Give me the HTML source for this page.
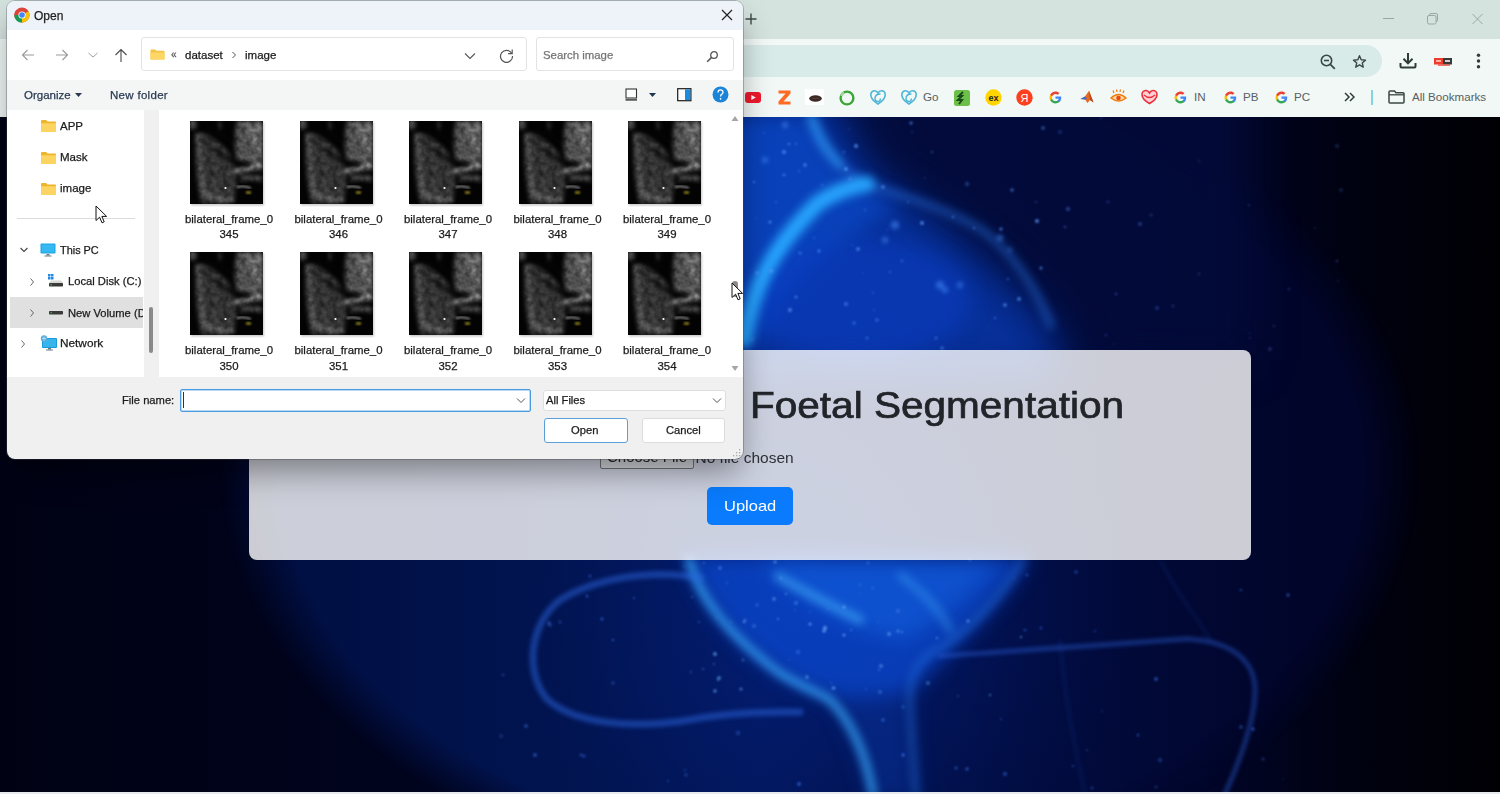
<!DOCTYPE html>
<html><head><meta charset="utf-8">
<style>
*{margin:0;padding:0;box-sizing:border-box}
html,body{width:1500px;height:794px;overflow:hidden}
body{position:relative;font-family:"Liberation Sans",sans-serif;background:#000418}
.a{position:absolute}
.t{position:absolute;white-space:nowrap;line-height:1}
#bg{left:0;top:117px;width:1500px;height:677px;overflow:hidden}
#tabs{left:0;top:0;width:1500px;height:39px;background:#d5e3df}
#tool{left:0;top:39px;width:1500px;height:78px;background:#f1f8f6}
#omni{left:720px;top:45px;width:662px;height:32px;background:#d8ebe9;border-radius:16px}
.bk{font-size:11.6px;color:#596064}
#card{left:249px;top:350px;width:1002px;height:210px;border-radius:8px;background:rgba(255,255,255,0.8);overflow:hidden}
#dlg{left:7px;top:1px;width:736px;height:458px;background:#f0f0f0;border-radius:8px;overflow:hidden;box-shadow:0 16px 32px -4px rgba(0,0,0,0.4),0 0 0 1px rgba(80,90,95,0.35)}
.d{font-size:11.5px;color:#1b1b1b}
#dlg .t{-webkit-text-stroke:0.25px currentColor}
</style></head>
<body>
<svg width="0" height="0" style="position:absolute">
<defs>
<filter color-interpolation-filters="sRGB" id="ub" x="-10%" y="-10%" width="120%" height="120%"><feGaussianBlur stdDeviation="2.2"/></filter>
<filter color-interpolation-filters="sRGB" id="spk" filterUnits="userSpaceOnUse" x="0" y="0" width="73" height="83"><feGaussianBlur in="SourceGraphic" stdDeviation="2.2" result="bl"/><feTurbulence type="fractalNoise" baseFrequency="0.18" numOctaves="2" seed="5" result="n"/><feColorMatrix in="n" type="matrix" values="1 0 0 0 0  1 0 0 0 0  1 0 0 0 0  0 0 0 0 1" result="g"/><feGaussianBlur in="g" stdDeviation="0.6" result="g2"/><feComposite in="bl" in2="g2" operator="arithmetic" k1="0.8" k2="0.38" k3="0" k4="0"/></filter>
<filter color-interpolation-filters="sRGB" id="ub1" x="-30%" y="-30%" width="160%" height="160%"><feGaussianBlur stdDeviation="0.8"/></filter>
<filter color-interpolation-filters="sRGB" id="sh" x="-10%" y="-10%" width="130%" height="130%"><feGaussianBlur stdDeviation="1"/></filter>
<clipPath id="uc"><rect x="0" y="0" width="73" height="83"/></clipPath>
<g id="us">
<rect x="1" y="1.5" width="73" height="83" fill="#000" opacity="0.22" filter="url(#sh)"/>
<rect x="0" y="0" width="73" height="83" fill="#030303"/>
<g clip-path="url(#uc)">
<g filter="url(#spk)">
<path d="M0 0 H6 V8 H0 Z" fill="#6a6a6a"/>
<path d="M6 12 C14 10 24 18 34 26 C44 36 46 52 46 64 C46 74 44 83 34 83 H12 C8 72 5 50 6 12 Z" fill="#474747"/>
<path d="M47 0 H73 V50 C66 46 58 44 48 42 C44 28 44 14 47 0 Z" fill="#666"/>
<path d="M56 2 H73 V36 C68 32 60 20 56 2 Z" fill="#858585"/>
<path d="M7 14 C9 30 10 60 14 78" stroke="#6a6a6a" stroke-width="4" fill="none"/>
<path d="M30 0 V14" stroke="#4a4a4a" stroke-width="2.5" fill="none"/>
<path d="M44 50 C52 50 62 48 72 44" stroke="#c0c0c0" stroke-width="4" fill="none"/>
<path d="M50 58 C56 56 64 56 72 58" stroke="#606060" stroke-width="5" fill="none"/>
<path d="M16 72 C22 78 32 80 44 79" stroke="#8a8a8a" stroke-width="3.5" fill="none"/>
<path d="M14 4 C22 10 32 14 44 22" stroke="#040404" stroke-width="10" fill="none"/>
<path d="M26 28 C30 34 36 38 42 42" stroke="#151515" stroke-width="5" fill="none"/>
<path d="M16 40 C20 44 22 50 24 58" stroke="#222" stroke-width="3" fill="none"/>
<path d="M30 46 C34 52 36 60 36 70" stroke="#2a2a2a" stroke-width="2.5" fill="none"/>
<path d="M12 20 C18 22 22 26 26 32" stroke="#1a1a1a" stroke-width="3" fill="none"/>
<path d="M46 42 C50 40 56 42 60 46" stroke="#050505" stroke-width="4" fill="none"/>
</g>
<path d="M47 66 C51 65 56 65 61 67" stroke="#c8c8c8" stroke-width="1.3" fill="none" filter="url(#ub1)"/>
<circle cx="35.5" cy="67" r="1.1" fill="#fff"/>
<rect x="56" y="70.5" width="5" height="2" fill="#b0a020" filter="url(#ub1)"/>
</g>
</g>
</defs></svg>
<!-- page background -->
<div id="bg" class="a"><svg width="1500" height="677" viewBox="0 117 1500 677">
<defs>
<linearGradient id="base" x1="0" y1="0" x2="1500" y2="0" gradientUnits="userSpaceOnUse">
<stop offset="0" stop-color="#000214"/><stop offset="0.3" stop-color="#00041e"/><stop offset="0.6" stop-color="#000528"/><stop offset="0.8" stop-color="#01052a"/><stop offset="0.9" stop-color="#000210"/><stop offset="1" stop-color="#000004"/>
</linearGradient>
<linearGradient id="circ" x1="220" y1="0" x2="1300" y2="0" gradientUnits="userSpaceOnUse">
<stop offset="0" stop-color="#000e40"/><stop offset="0.2" stop-color="#01124a"/><stop offset="0.5" stop-color="#02175a"/><stop offset="0.75" stop-color="#010c40"/><stop offset="1" stop-color="#01052a"/>
</linearGradient>
<radialGradient id="bigc" cx="820" cy="600" r="330" gradientUnits="userSpaceOnUse">
<stop offset="0" stop-color="#0630b0" stop-opacity="0.4"/><stop offset="0.6" stop-color="#04208a" stop-opacity="0.15"/><stop offset="1" stop-color="#021555" stop-opacity="0"/>
</radialGradient>
<filter color-interpolation-filters="sRGB" id="b1" filterUnits="userSpaceOnUse" x="-100" y="0" width="1700" height="900"><feGaussianBlur stdDeviation="0.9"/></filter>
<filter color-interpolation-filters="sRGB" id="b2" filterUnits="userSpaceOnUse" x="-100" y="0" width="1700" height="900"><feGaussianBlur stdDeviation="2"/></filter>
<filter color-interpolation-filters="sRGB" id="b5" filterUnits="userSpaceOnUse" x="-100" y="0" width="1700" height="900"><feGaussianBlur stdDeviation="5"/></filter>
<filter color-interpolation-filters="sRGB" id="b10" filterUnits="userSpaceOnUse" x="-100" y="0" width="1700" height="900"><feGaussianBlur stdDeviation="10"/></filter>
<filter color-interpolation-filters="sRGB" id="b20" filterUnits="userSpaceOnUse" x="-100" y="0" width="1700" height="900"><feGaussianBlur stdDeviation="22"/></filter>
<radialGradient id="cmr" cx="820" cy="470" r="600" gradientUnits="userSpaceOnUse" gradientTransform="translate(820 470) scale(1 0.7) translate(-820 -470)"><stop offset="0" stop-color="#fff"/><stop offset="0.9" stop-color="#fff"/><stop offset="1" stop-color="#000"/></radialGradient>
<mask id="cm" maskUnits="userSpaceOnUse" x="0" y="117" width="1500" height="677"><rect x="0" y="117" width="1500" height="677" fill="url(#cmr)"/></mask>
<filter color-interpolation-filters="sRGB" id="b40" filterUnits="userSpaceOnUse" x="-100" y="0" width="1700" height="900"><feGaussianBlur stdDeviation="40"/></filter>
</defs>
<rect x="0" y="117" width="1500" height="677" fill="url(#base)"/>
<rect x="0" y="117" width="1500" height="677" fill="url(#circ)" mask="url(#cm)"/>
<rect x="0" y="117" width="1500" height="677" fill="url(#bigc)"/>
<!-- top head region -->
<g filter="url(#b20)">
<path d="M720 100 H840 C870 180 960 220 1060 330 L1060 380 H720 Z" fill="#0836a8" opacity="0.85"/>
</g>
<g filter="url(#b20)">
<path d="M850 60 H1250 L1250 360 L1100 360 C1020 260 960 210 900 185 C870 165 855 140 850 60 Z" fill="#020a3a" opacity="0.85"/>
</g>
<g filter="url(#b10)">
<path d="M730 117 H812 C830 170 860 190 900 205 C860 230 800 260 760 340 H730 Z" fill="#0a48c8" opacity="0.7"/>
<ellipse cx="860" cy="300" rx="110" ry="60" fill="#0a3cc0" opacity="0.6"/>
</g>
<g filter="url(#b5)" fill="none" stroke-linecap="round">
<path d="M809 117 C815 140 825 160 867 184 C900 195 950 210 982 230 C1010 250 1035 285 1051 326" stroke="#2670e0" stroke-width="6" opacity="0.65"/>
<path d="M744 340 C752 290 770 250 818 203 C835 192 850 186 867 184" stroke="#28a8ff" stroke-width="16" opacity="0.95"/>
<path d="M812 117 C818 135 826 150 840 165" stroke="#30a8ff" stroke-width="9" opacity="0.6"/>
</g>
<g filter="url(#b2)" fill="#4a90ff" opacity="0.55">
<circle cx="895" cy="225" r="4"/><circle cx="885" cy="240" r="3"/><circle cx="945" cy="290" r="3"/><circle cx="940" cy="285" r="4"/><circle cx="960" cy="285" r="3"/><circle cx="785" cy="125" r="3"/><circle cx="765" cy="160" r="3"/><circle cx="1000" cy="238" r="3"/><circle cx="1010" cy="250" r="2"/>
</g>
<!-- bottom bowl -->
<g filter="url(#b10)">
<path d="M685 555 C710 620 760 670 818 692 C850 700 880 700 912 690 C950 650 1000 610 1030 555 Z" fill="#0a46cc" opacity="0.8"/>
<path d="M830 695 C850 730 862 760 870 800 H918 C912 760 910 730 912 690 Z" fill="#0838a8" opacity="0.45"/>
<path d="M760 560 C800 600 850 630 905 640 C940 620 980 590 1000 560 Z" fill="#1a70f0" opacity="0.4"/>
</g>
<g filter="url(#b5)" fill="none" stroke-linecap="round">
<path d="M689 560 C700 600 730 635 778 672 C800 686 818 692 830 700 C850 720 865 750 873 794" stroke="#38acff" stroke-width="7" opacity="0.9"/>
<path d="M1023 560 C1000 600 960 640 931 653 C915 665 908 680 910 708 C912 740 914 770 916 794" stroke="#2a80f0" stroke-width="5" opacity="0.55"/>
<path d="M778 576 C800 590 830 605 860 620" stroke="#48b8ff" stroke-width="8" opacity="0.65"/>
<path d="M900 575 C920 590 940 610 950 630" stroke="#48b8ff" stroke-width="6" opacity="0.45"/>
</g>
<g filter="url(#b2)" fill="none" stroke-linecap="round">
<path d="M700 578 C660 570 600 575 560 600 C528 625 525 675 548 700 C580 728 650 728 700 718 C740 712 770 712 800 712" stroke="#2a66e0" stroke-width="7" opacity="0.5" stroke-dasharray="4 3"/>
<path d="M940 656 C1000 652 1100 645 1185 639 C1230 640 1255 660 1255 690 C1255 720 1240 760 1225 794" stroke="#2a5ed8" stroke-width="4" opacity="0.55" stroke-dasharray="4 3"/>
<path d="M1060 640 C1065 700 1075 750 1085 794" stroke="#1e4ab0" stroke-width="2" opacity="0.3"/>
<path d="M1160 560 C1180 600 1200 620 1210 640" stroke="#1e4ab0" stroke-width="2" opacity="0.3"/>
</g>
<g filter="url(#b1)"><circle cx="844" cy="152" r="1.7" fill="#5a9cff" opacity="0.28"/><circle cx="908" cy="202" r="0.9" fill="#5a9cff" opacity="0.48"/><circle cx="756" cy="218" r="0.9" fill="#5a9cff" opacity="0.29"/><circle cx="874" cy="310" r="1.0" fill="#5a9cff" opacity="0.35"/><circle cx="936" cy="338" r="1.6" fill="#5a9cff" opacity="0.43"/><circle cx="1043" cy="128" r="2.0" fill="#5a9cff" opacity="0.38"/><circle cx="789" cy="144" r="1.2" fill="#5a9cff" opacity="0.62"/><circle cx="800" cy="253" r="1.7" fill="#5a9cff" opacity="0.42"/><circle cx="912" cy="132" r="0.9" fill="#5a9cff" opacity="0.34"/><circle cx="953" cy="217" r="1.2" fill="#5a9cff" opacity="0.51"/><circle cx="883" cy="187" r="1.9" fill="#5a9cff" opacity="0.56"/><circle cx="819" cy="251" r="1.5" fill="#5a9cff" opacity="0.64"/><circle cx="967" cy="184" r="2.2" fill="#5a9cff" opacity="0.30"/><circle cx="873" cy="293" r="1.0" fill="#5a9cff" opacity="0.47"/><circle cx="757" cy="273" r="1.9" fill="#5a9cff" opacity="0.51"/><circle cx="1012" cy="190" r="1.8" fill="#5a9cff" opacity="0.52"/><circle cx="922" cy="223" r="2.0" fill="#5a9cff" opacity="0.68"/><circle cx="890" cy="272" r="0.9" fill="#5a9cff" opacity="0.57"/><circle cx="942" cy="348" r="2.0" fill="#5a9cff" opacity="0.38"/><circle cx="863" cy="273" r="0.8" fill="#5a9cff" opacity="0.46"/><circle cx="796" cy="144" r="0.9" fill="#5a9cff" opacity="0.60"/><circle cx="784" cy="175" r="1.3" fill="#5a9cff" opacity="0.64"/><circle cx="770" cy="222" r="1.6" fill="#5a9cff" opacity="0.65"/><circle cx="995" cy="318" r="1.2" fill="#5a9cff" opacity="0.44"/><circle cx="854" cy="323" r="2.1" fill="#5a9cff" opacity="0.32"/><circle cx="799" cy="171" r="1.1" fill="#5a9cff" opacity="0.47"/><circle cx="925" cy="178" r="0.8" fill="#5a9cff" opacity="0.44"/><circle cx="858" cy="249" r="2.1" fill="#5a9cff" opacity="0.56"/><circle cx="902" cy="261" r="1.7" fill="#5a9cff" opacity="0.27"/><circle cx="1019" cy="299" r="2.0" fill="#5a9cff" opacity="0.61"/><circle cx="865" cy="210" r="0.9" fill="#5a9cff" opacity="0.54"/><circle cx="764" cy="133" r="1.1" fill="#5a9cff" opacity="0.32"/><circle cx="849" cy="129" r="0.8" fill="#5a9cff" opacity="0.32"/><circle cx="776" cy="202" r="0.8" fill="#5a9cff" opacity="0.64"/><circle cx="932" cy="152" r="1.2" fill="#5a9cff" opacity="0.41"/><circle cx="856" cy="146" r="2.0" fill="#5a9cff" opacity="0.70"/><circle cx="887" cy="230" r="0.9" fill="#5a9cff" opacity="0.30"/><circle cx="850" cy="179" r="2.0" fill="#5a9cff" opacity="0.32"/><circle cx="752" cy="339" r="1.5" fill="#5a9cff" opacity="0.32"/><circle cx="911" cy="123" r="1.5" fill="#5a9cff" opacity="0.69"/><circle cx="1008" cy="279" r="1.2" fill="#5a9cff" opacity="0.42"/><circle cx="796" cy="297" r="1.5" fill="#5a9cff" opacity="0.60"/><circle cx="846" cy="169" r="1.9" fill="#5a9cff" opacity="0.69"/><circle cx="1005" cy="305" r="1.9" fill="#5a9cff" opacity="0.58"/><circle cx="814" cy="238" r="1.3" fill="#5a9cff" opacity="0.26"/><circle cx="754" cy="182" r="1.2" fill="#5a9cff" opacity="0.56"/><circle cx="1037" cy="221" r="2.1" fill="#5a9cff" opacity="0.69"/><circle cx="1036" cy="202" r="1.1" fill="#5a9cff" opacity="0.35"/><circle cx="805" cy="165" r="1.7" fill="#5a9cff" opacity="0.66"/><circle cx="1001" cy="229" r="1.7" fill="#5a9cff" opacity="0.61"/><circle cx="771" cy="271" r="2.1" fill="#5a9cff" opacity="0.60"/><circle cx="974" cy="228" r="1.0" fill="#5a9cff" opacity="0.61"/><circle cx="846" cy="304" r="2.2" fill="#5a9cff" opacity="0.43"/><circle cx="867" cy="338" r="1.8" fill="#5a9cff" opacity="0.33"/><circle cx="784" cy="152" r="2.1" fill="#5a9cff" opacity="0.61"/><circle cx="790" cy="310" r="2.2" fill="#5a9cff" opacity="0.55"/><circle cx="852" cy="245" r="1.0" fill="#5a9cff" opacity="0.26"/><circle cx="1041" cy="268" r="1.5" fill="#5a9cff" opacity="0.67"/><circle cx="877" cy="320" r="2.0" fill="#5a9cff" opacity="0.34"/><circle cx="822" cy="185" r="1.1" fill="#5a9cff" opacity="0.51"/><circle cx="778" cy="619" r="1.0" fill="#6ab0ff" opacity="0.66"/><circle cx="810" cy="624" r="1.6" fill="#6ab0ff" opacity="0.66"/><circle cx="833" cy="688" r="1.5" fill="#6ab0ff" opacity="0.49"/><circle cx="868" cy="563" r="1.4" fill="#6ab0ff" opacity="0.33"/><circle cx="691" cy="672" r="1.0" fill="#6ab0ff" opacity="0.46"/><circle cx="937" cy="638" r="1.3" fill="#6ab0ff" opacity="0.48"/><circle cx="879" cy="670" r="0.9" fill="#6ab0ff" opacity="0.50"/><circle cx="774" cy="599" r="1.9" fill="#6ab0ff" opacity="0.48"/><circle cx="881" cy="666" r="2.1" fill="#6ab0ff" opacity="0.45"/><circle cx="898" cy="631" r="1.5" fill="#6ab0ff" opacity="0.56"/><circle cx="844" cy="635" r="1.5" fill="#6ab0ff" opacity="0.67"/><circle cx="928" cy="683" r="2.1" fill="#6ab0ff" opacity="0.37"/><circle cx="880" cy="692" r="2.0" fill="#6ab0ff" opacity="0.31"/><circle cx="731" cy="622" r="0.9" fill="#6ab0ff" opacity="0.36"/><circle cx="715" cy="654" r="1.9" fill="#6ab0ff" opacity="0.65"/><circle cx="743" cy="660" r="1.7" fill="#6ab0ff" opacity="0.31"/><circle cx="990" cy="695" r="1.1" fill="#6ab0ff" opacity="0.68"/><circle cx="825" cy="628" r="2.2" fill="#6ab0ff" opacity="0.62"/><circle cx="745" cy="620" r="1.5" fill="#6ab0ff" opacity="0.40"/><circle cx="757" cy="605" r="1.8" fill="#6ab0ff" opacity="0.26"/><circle cx="878" cy="622" r="0.8" fill="#6ab0ff" opacity="0.40"/><circle cx="902" cy="632" r="0.9" fill="#6ab0ff" opacity="0.69"/><circle cx="958" cy="696" r="0.9" fill="#6ab0ff" opacity="0.37"/><circle cx="703" cy="669" r="1.2" fill="#6ab0ff" opacity="0.31"/><circle cx="834" cy="688" r="1.9" fill="#6ab0ff" opacity="0.37"/><circle cx="741" cy="689" r="1.6" fill="#6ab0ff" opacity="0.57"/><circle cx="720" cy="568" r="1.8" fill="#6ab0ff" opacity="0.44"/><circle cx="715" cy="691" r="1.7" fill="#6ab0ff" opacity="0.61"/><circle cx="718" cy="680" r="0.9" fill="#6ab0ff" opacity="0.64"/><circle cx="844" cy="607" r="1.6" fill="#6ab0ff" opacity="0.67"/><circle cx="781" cy="578" r="1.5" fill="#6ab0ff" opacity="0.36"/><circle cx="727" cy="583" r="0.9" fill="#6ab0ff" opacity="0.34"/><circle cx="796" cy="603" r="1.9" fill="#6ab0ff" opacity="0.38"/><circle cx="860" cy="585" r="1.3" fill="#6ab0ff" opacity="0.26"/><circle cx="775" cy="562" r="1.8" fill="#6ab0ff" opacity="0.50"/><circle cx="754" cy="626" r="2.1" fill="#6ab0ff" opacity="0.30"/><circle cx="968" cy="621" r="1.5" fill="#6ab0ff" opacity="0.63"/><circle cx="824" cy="631" r="1.8" fill="#6ab0ff" opacity="0.69"/><circle cx="807" cy="677" r="1.8" fill="#6ab0ff" opacity="0.54"/><circle cx="828" cy="609" r="0.9" fill="#6ab0ff" opacity="0.31"/><circle cx="714" cy="664" r="1.2" fill="#6ab0ff" opacity="0.32"/><circle cx="719" cy="678" r="2.0" fill="#6ab0ff" opacity="0.55"/><circle cx="786" cy="594" r="1.2" fill="#6ab0ff" opacity="0.46"/><circle cx="744" cy="622" r="1.2" fill="#6ab0ff" opacity="0.68"/><circle cx="1021" cy="637" r="1.1" fill="#6ab0ff" opacity="0.68"/><circle cx="795" cy="610" r="0.8" fill="#6ab0ff" opacity="0.42"/><circle cx="851" cy="630" r="1.1" fill="#6ab0ff" opacity="0.48"/><circle cx="692" cy="597" r="0.9" fill="#6ab0ff" opacity="0.43"/><circle cx="704" cy="563" r="1.2" fill="#6ab0ff" opacity="0.35"/><circle cx="889" cy="634" r="1.9" fill="#6ab0ff" opacity="0.55"/><circle cx="1073" cy="766" r="1.3" fill="#3a70e0" opacity="0.40"/><circle cx="1288" cy="595" r="1.8" fill="#3a70e0" opacity="0.54"/><circle cx="535" cy="755" r="2.0" fill="#3a70e0" opacity="0.53"/><circle cx="1087" cy="750" r="1.0" fill="#3a70e0" opacity="0.49"/><circle cx="903" cy="755" r="1.9" fill="#3a70e0" opacity="0.62"/><circle cx="967" cy="769" r="1.8" fill="#3a70e0" opacity="0.56"/><circle cx="684" cy="567" r="1.0" fill="#3a70e0" opacity="0.41"/><circle cx="584" cy="756" r="1.6" fill="#3a70e0" opacity="0.53"/><circle cx="1001" cy="719" r="1.5" fill="#3a70e0" opacity="0.25"/><circle cx="1138" cy="735" r="1.5" fill="#3a70e0" opacity="0.49"/><circle cx="1027" cy="575" r="1.8" fill="#3a70e0" opacity="0.36"/><circle cx="560" cy="622" r="1.8" fill="#3a70e0" opacity="0.34"/><circle cx="1092" cy="788" r="1.5" fill="#3a70e0" opacity="0.42"/><circle cx="883" cy="720" r="1.9" fill="#3a70e0" opacity="0.53"/><circle cx="1014" cy="578" r="1.0" fill="#3a70e0" opacity="0.36"/><circle cx="1095" cy="631" r="1.6" fill="#3a70e0" opacity="0.26"/><circle cx="549" cy="623" r="1.7" fill="#3a70e0" opacity="0.56"/><circle cx="1041" cy="628" r="1.5" fill="#3a70e0" opacity="0.46"/><circle cx="873" cy="588" r="2.1" fill="#3a70e0" opacity="0.34"/><circle cx="1283" cy="779" r="0.8" fill="#3a70e0" opacity="0.46"/><circle cx="1156" cy="787" r="1.4" fill="#3a70e0" opacity="0.37"/><circle cx="668" cy="781" r="1.1" fill="#3a70e0" opacity="0.51"/><circle cx="613" cy="683" r="2.1" fill="#3a70e0" opacity="0.31"/><circle cx="1156" cy="679" r="2.0" fill="#3a70e0" opacity="0.57"/><circle cx="685" cy="770" r="1.5" fill="#3a70e0" opacity="0.26"/><circle cx="503" cy="675" r="1.4" fill="#3a70e0" opacity="0.39"/><circle cx="613" cy="640" r="1.2" fill="#3a70e0" opacity="0.63"/><circle cx="501" cy="736" r="2.0" fill="#3a70e0" opacity="0.30"/><circle cx="1241" cy="727" r="2.1" fill="#3a70e0" opacity="0.38"/><circle cx="798" cy="652" r="2.2" fill="#3a70e0" opacity="0.52"/><circle cx="789" cy="660" r="1.2" fill="#3a70e0" opacity="0.27"/><circle cx="581" cy="755" r="1.2" fill="#3a70e0" opacity="0.67"/><circle cx="699" cy="622" r="1.5" fill="#3a70e0" opacity="0.34"/><circle cx="799" cy="784" r="2.0" fill="#3a70e0" opacity="0.62"/><circle cx="1005" cy="774" r="2.1" fill="#3a70e0" opacity="0.50"/><circle cx="1076" cy="572" r="1.8" fill="#3a70e0" opacity="0.45"/><circle cx="1102" cy="711" r="1.2" fill="#3a70e0" opacity="0.27"/><circle cx="1241" cy="590" r="1.5" fill="#3a70e0" opacity="0.40"/><circle cx="738" cy="733" r="2.2" fill="#3a70e0" opacity="0.37"/><circle cx="1025" cy="630" r="1.6" fill="#3a70e0" opacity="0.43"/><circle cx="634" cy="598" r="1.1" fill="#3a70e0" opacity="0.66"/><circle cx="898" cy="611" r="2.1" fill="#3a70e0" opacity="0.70"/><circle cx="860" cy="593" r="1.1" fill="#3a70e0" opacity="0.29"/><circle cx="774" cy="581" r="1.1" fill="#3a70e0" opacity="0.37"/><circle cx="956" cy="768" r="1.8" fill="#3a70e0" opacity="0.44"/><circle cx="831" cy="683" r="1.3" fill="#3a70e0" opacity="0.40"/><circle cx="550" cy="625" r="2.2" fill="#3a70e0" opacity="0.31"/><circle cx="903" cy="707" r="2.0" fill="#3a70e0" opacity="0.35"/><circle cx="717" cy="618" r="1.4" fill="#3a70e0" opacity="0.45"/><circle cx="1263" cy="759" r="2.0" fill="#3a70e0" opacity="0.26"/><circle cx="526" cy="726" r="2.1" fill="#3a70e0" opacity="0.46"/><circle cx="970" cy="560" r="1.3" fill="#3a70e0" opacity="0.67"/><circle cx="1160" cy="760" r="2.2" fill="#3a70e0" opacity="0.36"/><circle cx="587" cy="596" r="1.5" fill="#3a70e0" opacity="0.56"/><circle cx="1253" cy="729" r="1.7" fill="#3a70e0" opacity="0.59"/><circle cx="866" cy="689" r="0.9" fill="#3a70e0" opacity="0.60"/><circle cx="686" cy="775" r="1.7" fill="#3a70e0" opacity="0.39"/><circle cx="602" cy="619" r="1.7" fill="#3a70e0" opacity="0.56"/><circle cx="590" cy="576" r="1.5" fill="#3a70e0" opacity="0.51"/><circle cx="810" cy="612" r="1.6" fill="#3a70e0" opacity="0.25"/><circle cx="1140" cy="224" r="2.1" fill="#3a5ab0" opacity="0.54"/><circle cx="1315" cy="228" r="1.1" fill="#3a5ab0" opacity="0.36"/><circle cx="1338" cy="281" r="1.2" fill="#3a5ab0" opacity="0.26"/><circle cx="1199" cy="274" r="1.4" fill="#3a5ab0" opacity="0.37"/><circle cx="1250" cy="333" r="1.1" fill="#3a5ab0" opacity="0.27"/><circle cx="1151" cy="215" r="1.8" fill="#3a5ab0" opacity="0.34"/><circle cx="1289" cy="289" r="1.5" fill="#3a5ab0" opacity="0.34"/><circle cx="1341" cy="190" r="1.9" fill="#3a5ab0" opacity="0.35"/><circle cx="1116" cy="294" r="1.2" fill="#3a5ab0" opacity="0.68"/><circle cx="1199" cy="161" r="1.1" fill="#3a5ab0" opacity="0.44"/><circle cx="1250" cy="338" r="1.0" fill="#3a5ab0" opacity="0.43"/><circle cx="1114" cy="344" r="1.0" fill="#3a5ab0" opacity="0.27"/><circle cx="1068" cy="209" r="2.1" fill="#3a5ab0" opacity="0.65"/><circle cx="1270" cy="349" r="2.1" fill="#3a5ab0" opacity="0.40"/><circle cx="1106" cy="335" r="1.8" fill="#3a5ab0" opacity="0.26"/><circle cx="1249" cy="205" r="1.3" fill="#3a5ab0" opacity="0.40"/><circle cx="1101" cy="118" r="1.2" fill="#3a5ab0" opacity="0.41"/><circle cx="1337" cy="146" r="2.1" fill="#3a5ab0" opacity="0.34"/><circle cx="1157" cy="308" r="2.0" fill="#3a5ab0" opacity="0.44"/><circle cx="1065" cy="227" r="1.3" fill="#3a5ab0" opacity="0.66"/><circle cx="1108" cy="202" r="2.1" fill="#3a5ab0" opacity="0.26"/><circle cx="1173" cy="306" r="1.9" fill="#3a5ab0" opacity="0.27"/><circle cx="1060" cy="132" r="2.1" fill="#3a5ab0" opacity="0.37"/><circle cx="1274" cy="326" r="1.3" fill="#3a5ab0" opacity="0.37"/><circle cx="1337" cy="261" r="1.2" fill="#3a5ab0" opacity="0.57"/></g>
<rect x="0" y="792" width="1500" height="2" fill="#e6eaec"/>
</svg></div>

<!-- chrome -->
<div id="tabs" class="a"></div>
<div id="tool" class="a"></div>
<div id="omni" class="a"></div>
<svg class="a" style="left:745px;top:13px" width="12" height="12" viewBox="0 0 12 12"><path d="M6 0.5 V11.5 M0.5 6 H11.5" stroke="#3c4a46" stroke-width="1.4"/></svg>
<svg class="a" style="left:1382px;top:12px" width="104" height="14" viewBox="0 0 104 14">
<path d="M1 6.5 H12" stroke="#9aa6a3" stroke-width="1"/>
<rect x="45.5" y="3.5" width="8.5" height="8.5" rx="1.5" fill="none" stroke="#9aa6a3" stroke-width="1"/>
<path d="M47.5 3 Q47.5 1.5 49 1.5 H54 Q55.5 1.5 55.5 3 V8 Q55.5 9.5 54 9.5" fill="none" stroke="#9aa6a3" stroke-width="1"/>
<path d="M90.5 2 L100.5 12 M100.5 2 L90.5 12" stroke="#9aa6a3" stroke-width="1"/>
</svg>
<!-- omnibox icons -->
<svg class="a" style="left:1320px;top:54px" width="16" height="16" viewBox="0 0 16 16"><circle cx="6.5" cy="6.5" r="5.2" fill="none" stroke="#3b4744" stroke-width="1.6"/><path d="M4 6.5 H9" stroke="#3b4744" stroke-width="1.6"/><path d="M10.3 10.3 L14.8 14.8" stroke="#3b4744" stroke-width="1.8"/></svg>
<svg class="a" style="left:1352px;top:54px" width="15" height="15" viewBox="0 0 24 24"><path d="M12 2.8 L14.7 9.2 L21.6 9.8 L16.4 14.3 L18 21.1 L12 17.5 L6 21.1 L7.6 14.3 L2.4 9.8 L9.3 9.2 Z" fill="none" stroke="#3b4744" stroke-width="2.2" stroke-linejoin="round"/></svg>
<svg class="a" style="left:1399px;top:52px" width="18" height="17" viewBox="0 0 18 17"><path d="M9 1 V11 M4.5 6.8 L9 11.3 L13.5 6.8" fill="none" stroke="#2f3b38" stroke-width="2"/><path d="M1.5 11 V14.5 Q1.5 15.5 2.5 15.5 H15.5 Q16.5 15.5 16.5 14.5 V11" fill="none" stroke="#2f3b38" stroke-width="2"/></svg>
<svg class="a" style="left:1434px;top:57px" width="19" height="9" viewBox="0 0 19 9"><rect x="0" y="1" width="9" height="6.5" fill="#ef3b2c"/><rect x="9" y="1" width="9" height="6.5" fill="#3a3a3a"/><rect x="2" y="3" width="5" height="2" fill="#ffb0a0"/><rect x="11" y="3" width="5" height="2" fill="#d0d0d0"/><rect x="4" y="7.5" width="12" height="1.2" fill="#ef3b2c"/></svg>
<svg class="a" style="left:1476px;top:53px" width="5" height="16" viewBox="0 0 5 16"><circle cx="2.5" cy="2.2" r="1.7" fill="#2f3b38"/><circle cx="2.5" cy="8" r="1.7" fill="#2f3b38"/><circle cx="2.5" cy="13.8" r="1.7" fill="#2f3b38"/></svg>
<!-- bookmarks -->
<svg class="a" style="left:745px;top:92px" width="16" height="11" viewBox="0 0 16 11"><rect x="0" y="0" width="16" height="11" rx="3" fill="#f0192d"/><path d="M6.3 3 L10.8 5.5 L6.3 8 Z" fill="#fff"/></svg>
<svg class="a" style="left:778px;top:90px" width="13" height="15" viewBox="0 0 13 15"><path d="M0.5 0.5 H12.5 V3.5 L5.5 11.5 H12.5 V14.5 H0.5 V11.5 L7.5 3.5 H0.5 Z" fill="#ff6b22"/></svg>
<div class="a" style="left:805px;top:89px;width:19px;height:16px;background:#fff"></div>
<svg class="a" style="left:809px;top:95px" width="13" height="7" viewBox="0 0 13 7"><ellipse cx="6.5" cy="3.5" rx="6.3" ry="3.2" fill="#3b2a28"/><path d="M3 3.4 H10" stroke="#6a5048" stroke-width="0.6"/></svg>
<svg class="a" style="left:839px;top:90px" width="16" height="16" viewBox="0 0 16 16"><circle cx="8" cy="8" r="6.4" fill="none" stroke="#3aa535" stroke-width="2.4"/><path d="M2.3 6 A6.4 6.4 0 0 1 5 2.4" fill="none" stroke="#a8d8a0" stroke-width="2.4"/></svg>
<svg class="a" style="left:870px;top:90px" width="16" height="15" viewBox="0 0 16 15"><path d="M8 14 C3 11 0.8 8 0.8 4.8 C0.8 2.3 2.6 0.8 4.6 0.8 C6.2 0.8 7.3 1.8 8 3 C8.7 1.8 9.8 0.8 11.4 0.8 C13.4 0.8 15.2 2.3 15.2 4.8 C15.2 8 13 11 8 14 Z" fill="none" stroke="#4db6d6" stroke-width="1.6"/><path d="M10.5 4 C7 4 5 6 5 8.5 C5 10.5 6.5 11.5 8 11.5 C9.8 11.5 10.5 10 10.3 8.5" fill="none" stroke="#4db6d6" stroke-width="1.4"/></svg>
<svg class="a" style="left:901px;top:90px" width="16" height="15" viewBox="0 0 16 15"><path d="M8 14 C3 11 0.8 8 0.8 4.8 C0.8 2.3 2.6 0.8 4.6 0.8 C6.2 0.8 7.3 1.8 8 3 C8.7 1.8 9.8 0.8 11.4 0.8 C13.4 0.8 15.2 2.3 15.2 4.8 C15.2 8 13 11 8 14 Z" fill="none" stroke="#4db6d6" stroke-width="1.6"/><path d="M10.5 4 C7 4 5 6 5 8.5 C5 10.5 6.5 11.5 8 11.5 C9.8 11.5 10.5 10 10.3 8.5" fill="none" stroke="#4db6d6" stroke-width="1.4"/></svg>
<div class="t bk" style="left:923px;top:91px">Go</div>
<svg class="a" style="left:954px;top:90px" width="16" height="16" viewBox="0 0 16 16"><rect x="0" y="0" width="16" height="16" rx="2.5" fill="#6cc04a"/><path d="M9 2 L5 6 H8 L4 10 H8 L5 14" fill="none" stroke="#1a4a1a" stroke-width="2"/></svg>
<svg class="a" style="left:985px;top:89px" width="17" height="17" viewBox="0 0 17 17"><circle cx="8.5" cy="8.5" r="8.2" fill="#ffd400"/><text x="8.5" y="11.5" font-family="Liberation Sans" font-size="9" font-weight="bold" text-anchor="middle" fill="#222">ex</text></svg>
<svg class="a" style="left:1016px;top:89px" width="17" height="17" viewBox="0 0 17 17"><circle cx="8.5" cy="8.5" r="8.2" fill="#fc3f1d"/><text x="8.5" y="12.5" font-family="Liberation Sans" font-size="11" text-anchor="middle" fill="#fff">Я</text></svg>
<svg class="a" style="left:1049px;top:91px" width="13" height="13" viewBox="0 0 48 48"><path fill="#4285F4" d="M45.1 24.5c0-1.6-.1-3.1-.4-4.5H24v8.5h11.8c-.5 2.7-2.1 5.1-4.4 6.6v5.5h7.1c4.2-3.8 6.6-9.5 6.6-16.1z"/><path fill="#34A853" d="M24 46c5.9 0 10.9-2 14.5-5.3l-7.1-5.5c-2 1.3-4.5 2.1-7.4 2.1-5.7 0-10.6-3.9-12.3-9.1H4.4v5.7C8 41.1 15.4 46 24 46z"/><path fill="#FBBC05" d="M11.7 28.2c-.4-1.3-.7-2.7-.7-4.2s.3-2.9.7-4.2v-5.7H4.4C2.9 17.1 2 20.4 2 24s.9 6.9 2.4 9.9l7.3-5.7z"/><path fill="#EA4335" d="M24 10.7c3.2 0 6.1 1.1 8.4 3.3l6.3-6.3C34.9 4.2 29.9 2 24 2 15.4 2 8 6.9 4.4 14.1l7.3 5.7c1.7-5.2 6.6-9.1 12.3-9.1z"/></svg>
<svg class="a" style="left:1080px;top:90px" width="14" height="14" viewBox="0 0 14 14"><path d="M0.5 9 L5 6.5 L9 0.8 L13.5 12.5 L10 10 L7.5 13 L5 9.5 Z" fill="#e86a1e"/><path d="M0.5 9 L5 6.5 L7 9 L5 9.5 Z" fill="#3a6ad0"/><path d="M9 0.8 L13.5 12.5 L10 10 Z" fill="#b8441a"/></svg>
<svg class="a" style="left:1110px;top:89px" width="17" height="15" viewBox="0 0 17 15"><path d="M1 9 Q8.5 2 16 9 Q8.5 15 1 9 Z" fill="#ffd9a0" stroke="#f07a10" stroke-width="1.5"/><circle cx="8.5" cy="9" r="2.3" fill="#e84a10"/><path d="M4 4 L3 1.5 M7 3 L6.5 0.5 M10 3 L10.5 0.5 M13 4 L14 1.5" stroke="#f07a10" stroke-width="1.2"/></svg>
<svg class="a" style="left:1141px;top:89px" width="17" height="16" viewBox="0 0 17 16"><path d="M8.5 14.5 C4 12 1 9 1 5.5 C1 3 3 1.5 5 1.5 C6.8 1.5 7.8 2.8 8.5 4 C9.2 2.8 10.2 1.5 12 1.5 C14 1.5 16 3 16 5.5 C16 9 13 12 8.5 14.5 Z" fill="#ffd0d4" stroke="#e8303a" stroke-width="1.6"/><path d="M3 6 Q8.5 11 14 6" fill="none" stroke="#e8303a" stroke-width="1.3"/></svg>
<svg class="a" style="left:1174px;top:91px" width="13" height="13" viewBox="0 0 48 48"><path fill="#4285F4" d="M45.1 24.5c0-1.6-.1-3.1-.4-4.5H24v8.5h11.8c-.5 2.7-2.1 5.1-4.4 6.6v5.5h7.1c4.2-3.8 6.6-9.5 6.6-16.1z"/><path fill="#34A853" d="M24 46c5.9 0 10.9-2 14.5-5.3l-7.1-5.5c-2 1.3-4.5 2.1-7.4 2.1-5.7 0-10.6-3.9-12.3-9.1H4.4v5.7C8 41.1 15.4 46 24 46z"/><path fill="#FBBC05" d="M11.7 28.2c-.4-1.3-.7-2.7-.7-4.2s.3-2.9.7-4.2v-5.7H4.4C2.9 17.1 2 20.4 2 24s.9 6.9 2.4 9.9l7.3-5.7z"/><path fill="#EA4335" d="M24 10.7c3.2 0 6.1 1.1 8.4 3.3l6.3-6.3C34.9 4.2 29.9 2 24 2 15.4 2 8 6.9 4.4 14.1l7.3 5.7c1.7-5.2 6.6-9.1 12.3-9.1z"/></svg><div class="t bk" style="left:1194px;top:91px">IN</div>
<svg class="a" style="left:1224px;top:91px" width="13" height="13" viewBox="0 0 48 48"><path fill="#4285F4" d="M45.1 24.5c0-1.6-.1-3.1-.4-4.5H24v8.5h11.8c-.5 2.7-2.1 5.1-4.4 6.6v5.5h7.1c4.2-3.8 6.6-9.5 6.6-16.1z"/><path fill="#34A853" d="M24 46c5.9 0 10.9-2 14.5-5.3l-7.1-5.5c-2 1.3-4.5 2.1-7.4 2.1-5.7 0-10.6-3.9-12.3-9.1H4.4v5.7C8 41.1 15.4 46 24 46z"/><path fill="#FBBC05" d="M11.7 28.2c-.4-1.3-.7-2.7-.7-4.2s.3-2.9.7-4.2v-5.7H4.4C2.9 17.1 2 20.4 2 24s.9 6.9 2.4 9.9l7.3-5.7z"/><path fill="#EA4335" d="M24 10.7c3.2 0 6.1 1.1 8.4 3.3l6.3-6.3C34.9 4.2 29.9 2 24 2 15.4 2 8 6.9 4.4 14.1l7.3 5.7c1.7-5.2 6.6-9.1 12.3-9.1z"/></svg><div class="t bk" style="left:1243px;top:91px">PB</div>
<svg class="a" style="left:1275px;top:91px" width="13" height="13" viewBox="0 0 48 48"><path fill="#4285F4" d="M45.1 24.5c0-1.6-.1-3.1-.4-4.5H24v8.5h11.8c-.5 2.7-2.1 5.1-4.4 6.6v5.5h7.1c4.2-3.8 6.6-9.5 6.6-16.1z"/><path fill="#34A853" d="M24 46c5.9 0 10.9-2 14.5-5.3l-7.1-5.5c-2 1.3-4.5 2.1-7.4 2.1-5.7 0-10.6-3.9-12.3-9.1H4.4v5.7C8 41.1 15.4 46 24 46z"/><path fill="#FBBC05" d="M11.7 28.2c-.4-1.3-.7-2.7-.7-4.2s.3-2.9.7-4.2v-5.7H4.4C2.9 17.1 2 20.4 2 24s.9 6.9 2.4 9.9l7.3-5.7z"/><path fill="#EA4335" d="M24 10.7c3.2 0 6.1 1.1 8.4 3.3l6.3-6.3C34.9 4.2 29.9 2 24 2 15.4 2 8 6.9 4.4 14.1l7.3 5.7c1.7-5.2 6.6-9.1 12.3-9.1z"/></svg><div class="t bk" style="left:1294px;top:91px">PC</div>
<svg class="a" style="left:1344px;top:92px" width="11" height="10" viewBox="0 0 11 10"><path d="M1 1 L5 5 L1 9 M6 1 L10 5 L6 9" fill="none" stroke="#2f3b38" stroke-width="1.5"/></svg>
<div class="a" style="left:1371px;top:90px;width:2px;height:15px;background:#7fd8e0"></div>
<svg class="a" style="left:1388px;top:90px" width="17" height="14" viewBox="0 0 17 14"><path d="M1 2 Q1 1 2 1 H6.5 L8 2.8 H15 Q16 2.8 16 3.8 V12 Q16 13 15 13 H2 Q1 13 1 12 Z" fill="none" stroke="#3b4744" stroke-width="1.5"/><path d="M1 4.8 H16" stroke="#3b4744" stroke-width="1.3"/></svg>
<div class="t bk" style="left:1412px;top:91px">All Bookmarks</div>

<!-- card -->
<div id="card" class="a"></div>
<div class="t" style="left:750px;top:387.5px;font-size:36px;color:#212529;transform-origin:0 0;transform:scaleX(1.126);-webkit-text-stroke:0.7px #212529">Foetal Segmentation</div>
<div class="a" style="left:600px;top:445px;width:94px;height:24px;background:#d4d6dc;border:1px solid #707378;border-radius:2px"></div>
<div class="t" style="left:607px;top:449px;font-size:15px;color:#212529">Choose File</div>
<div class="t" style="left:695.5px;top:449.5px;font-size:15.5px;color:#2d3136">No file chosen</div>
<div class="a" style="left:707px;top:487px;width:86px;height:38px;background:#0a7bfd;border-radius:5px"></div>
<div class="t" style="left:724px;top:498px;font-size:15px;color:#fff;transform-origin:0 0;transform:scaleX(1.1);">Upload</div>

<!-- dialog -->
<div id="dlg" class="a">
<!-- title bar -->
<div class="a" style="left:0;top:0;width:736px;height:29px;background:#edf3f8"></div>
<svg class="a" style="left:7px;top:6px" width="16" height="16" viewBox="0 0 16 16">
<circle cx="8" cy="8" r="7.6" fill="#db4437"/>
<path d="M8 8 L1.4 11.8 A7.6 7.6 0 0 1 2.2 3 Z" fill="#db4437"/>
<path d="M8 8 L14.6 4.2 A7.6 7.6 0 0 1 8 15.6 Z" fill="#f4c20d"/>
<path d="M8 8 L8 15.6 A7.6 7.6 0 0 1 0.6 9.5 L1.4 11.8 Z" fill="#0f9d58"/>
<path d="M8 8 L1.4 11.8 A7.6 7.6 0 0 1 0.4 8 Z" fill="#0f9d58"/>
<circle cx="8" cy="8" r="3.6" fill="#fff"/>
<circle cx="8" cy="8" r="2.8" fill="#4285f4"/>
</svg>
<div class="t" style="left:27px;top:9px;font-size:12px;color:#1f1f1f">Open</div>
<svg class="a" style="left:714px;top:8px" width="12" height="12" viewBox="0 0 12 12"><path d="M1 1 L11 11 M11 1 L1 11" stroke="#222" stroke-width="1.2"/></svg>

<!-- nav row -->
<div class="a" style="left:0;top:29px;width:736px;height:50px;background:#fff"></div>
<svg class="a" style="left:14px;top:47px" width="14" height="14" viewBox="0 0 14 14"><path d="M13 7 H1.5 M6.5 2 L1.5 7 L6.5 12" fill="none" stroke="#9a9a9a" stroke-width="1.1"/></svg>
<svg class="a" style="left:48px;top:47px" width="14" height="14" viewBox="0 0 14 14"><path d="M1 7 H12.5 M7.5 2 L12.5 7 L7.5 12" fill="none" stroke="#9a9a9a" stroke-width="1.1"/></svg>
<svg class="a" style="left:80px;top:50px" width="12" height="8" viewBox="0 0 12 8"><path d="M1.5 2 L6 6 L10.5 2" fill="none" stroke="#a0a0a0" stroke-width="1"/></svg>
<svg class="a" style="left:107px;top:47px" width="14" height="15" viewBox="0 0 14 15"><path d="M7 14 V1.5 M1.5 7 L7 1.5 L12.5 7" fill="none" stroke="#4a4a4a" stroke-width="1.1"/></svg>
<div class="a" style="left:134px;top:36px;width:386px;height:34px;background:#fff;border:1px solid #e3e3e3;border-radius:3px"></div>
<svg class="a" style="left:143px;top:47.5px" width="15" height="11" viewBox="0 0 16 13" preserveAspectRatio="none">
<path d="M0.5 1.5 Q0.5 0.5 1.5 0.5 H5.5 L7 2 H14.5 Q15.5 2 15.5 3 V11.5 Q15.5 12.5 14.5 12.5 H1.5 Q0.5 12.5 0.5 11.5 Z" fill="#f5c343"/>
<path d="M0.5 4 H15.5 V11.5 Q15.5 12.5 14.5 12.5 H1.5 Q0.5 12.5 0.5 11.5 Z" fill="#fcd765"/>
</svg>
<div class="t" style="left:164px;top:48.5px;font-size:10px;color:#555">&laquo;</div>
<div class="t d" style="left:178px;top:48.5px">dataset</div>
<svg class="a" style="left:224px;top:50px" width="6" height="8" viewBox="0 0 6 8"><path d="M1.5 1 L4.5 4 L1.5 7" fill="none" stroke="#555" stroke-width="1"/></svg>
<div class="t d" style="left:238px;top:48.5px">image</div>
<svg class="a" style="left:457px;top:51px" width="12" height="8" viewBox="0 0 12 8"><path d="M1 1.5 L6 6.5 L11 1.5" fill="none" stroke="#555" stroke-width="1.1"/></svg>
<svg class="a" style="left:492px;top:47px" width="15" height="15" viewBox="0 0 15 15"><path d="M12.6 5.2 A6 6 0 1 0 13.5 8" fill="none" stroke="#555" stroke-width="1.2"/><path d="M13.2 1.5 V5.6 H9.1" fill="none" stroke="#555" stroke-width="1.2"/></svg>
<div class="a" style="left:529px;top:36px;width:198px;height:34px;background:#fff;border:1px solid #e3e3e3;border-radius:3px"></div>
<div class="t" style="left:536px;top:49px;font-size:11.4px;color:#767676">Search image</div>
<svg class="a" style="left:699px;top:49px" width="13" height="13" viewBox="0 0 13 13"><circle cx="8" cy="5" r="3.3" fill="none" stroke="#555" stroke-width="1.3"/><path d="M5.6 7.4 L1.2 11.8" stroke="#555" stroke-width="1.5"/></svg>

<!-- command bar -->
<div class="a" style="left:0;top:79px;width:736px;height:30px;background:#f4f6f6"></div>
<div class="t" style="left:17px;top:89px;font-size:11.5px;color:#2b3b52">Organize</div>
<svg class="a" style="left:68px;top:92px" width="7" height="4" viewBox="0 0 7 4"><path d="M0 0 H7 L3.5 4 Z" fill="#2b3b52"/></svg>
<div class="t" style="left:103px;top:89px;font-size:11.5px;color:#2b3b52;letter-spacing:0.3px">New folder</div>
<svg class="a" style="left:618px;top:87px" width="13" height="13" viewBox="0 0 13 13"><rect x="1" y="1" width="10.5" height="9" fill="#fff" stroke="#333" stroke-width="1.1"/><rect x="0.5" y="11.2" width="11.5" height="1.4" fill="#333"/></svg>
<svg class="a" style="left:642px;top:92px" width="7" height="4" viewBox="0 0 7 4"><path d="M0 0 H7 L3.5 4 Z" fill="#1e3552"/></svg>
<svg class="a" style="left:670px;top:87px" width="15" height="14" viewBox="0 0 15 14"><rect x="0.7" y="0.7" width="13.2" height="12" fill="#fff" stroke="#1a1a1a" stroke-width="1.2"/><rect x="8" y="1.3" width="5.3" height="10.8" fill="#1c8ce0"/></svg>
<svg class="a" style="left:705px;top:85px" width="17" height="17" viewBox="0 0 17 17"><circle cx="8.5" cy="8.5" r="8" fill="#1b84d8"/><path d="M6 6.5 Q6 3.8 8.5 3.8 Q11 3.8 11 6.2 Q11 7.6 9.6 8.4 Q8.6 9 8.6 10.4" fill="none" stroke="#fff" stroke-width="1.3"/><circle cx="8.6" cy="12.8" r="0.85" fill="#fff"/></svg>

<!-- sidebar -->
<div class="a" style="left:0;top:109px;width:137px;height:267px;background:#fff"></div>
<div class="a" style="left:137px;top:109px;width:15px;height:267px;background:#f0f0f0"></div>
<div class="a" style="left:142px;top:306px;width:4px;height:46px;background:#8a8a8a;border-radius:2px"></div>
<svg class="a" style="left:34px;top:119px" width="15" height="12" viewBox="0 0 15 12"><path d="M0 1 Q0 0 1 0 H5 L6.5 1.5 H14 Q15 1.5 15 2.5 V11 Q15 12 14 12 H1 Q0 12 0 11 Z" fill="#f0b429"/><path d="M0 3.2 H15 V11 Q15 12 14 12 H1 Q0 12 0 11 Z" fill="#fcd462"/></svg><div class="t" style="left:53px;top:119.5px;font-size:11.5px;color:#1b1b1b">APP</div>
<svg class="a" style="left:34px;top:151px" width="15" height="12" viewBox="0 0 15 12"><path d="M0 1 Q0 0 1 0 H5 L6.5 1.5 H14 Q15 1.5 15 2.5 V11 Q15 12 14 12 H1 Q0 12 0 11 Z" fill="#f0b429"/><path d="M0 3.2 H15 V11 Q15 12 14 12 H1 Q0 12 0 11 Z" fill="#fcd462"/></svg><div class="t" style="left:53px;top:151.1px;font-size:11.5px;color:#1b1b1b">Mask</div>
<svg class="a" style="left:34px;top:182px" width="15" height="12" viewBox="0 0 15 12"><path d="M0 1 Q0 0 1 0 H5 L6.5 1.5 H14 Q15 1.5 15 2.5 V11 Q15 12 14 12 H1 Q0 12 0 11 Z" fill="#f0b429"/><path d="M0 3.2 H15 V11 Q15 12 14 12 H1 Q0 12 0 11 Z" fill="#fcd462"/></svg><div class="t" style="left:53px;top:182.0px;font-size:11.5px;color:#1b1b1b">image</div>
<div class="a" style="left:10px;top:217px;width:118px;height:1px;background:#dcdcdc"></div>
<svg class="a" style="left:12px;top:245px" width="10" height="8" viewBox="0 0 10 8"><path d="M1.5 2 L5 5.5 L8.5 2" fill="none" stroke="#444" stroke-width="1.1"/></svg>
<svg class="a" style="left:33px;top:242px" width="16" height="14" viewBox="0 0 16 14"><rect x="0.5" y="0.5" width="15" height="10" rx="1" fill="#1aa3e8"/><rect x="1.5" y="1.5" width="13" height="8" fill="#36b8f0"/><rect x="6.5" y="11" width="3" height="1.5" fill="#6a7c88"/><rect x="4.5" y="12.5" width="7" height="1" fill="#6a7c88"/></svg>
<div class="t" style="left:53px;top:243.8px;font-size:10.9px;color:#1b1b1b">This PC</div>
<svg class="a" style="left:22px;top:276px" width="6" height="10" viewBox="0 0 6 10"><path d="M1.5 1.5 L4.5 5 L1.5 8.5" fill="none" stroke="#666" stroke-width="1"/></svg>
<svg class="a" style="left:41px;top:273px" width="16" height="14" viewBox="0 0 16 14"><rect x="0" y="0" width="2.5" height="2.5" fill="#1e88e5"/><rect x="3" y="0" width="2.5" height="2.5" fill="#1e88e5"/><rect x="0" y="3" width="2.5" height="2.5" fill="#1e88e5"/><rect x="3" y="3" width="2.5" height="2.5" fill="#1e88e5"/><path d="M1 9 L3 6.5 H13 L15 9 Z" fill="#d8d8d8"/><rect x="1" y="9" width="14" height="3.6" rx="0.8" fill="#3a3a3a"/><rect x="2.5" y="10.3" width="1.3" height="1" fill="#5fd35f"/></svg>
<div class="t" style="left:61px;top:275.2px;font-size:11.2px;color:#1b1b1b">Local Disk (C:)</div>
<div class="a" style="left:3px;top:296px;width:133px;height:31px;background:#e0e0e0"></div>
<svg class="a" style="left:22px;top:307px" width="6" height="10" viewBox="0 0 6 10"><path d="M1.5 1.5 L4.5 5 L1.5 8.5" fill="none" stroke="#666" stroke-width="1"/></svg>
<svg class="a" style="left:41px;top:308px" width="16" height="8" viewBox="0 0 16 8"><rect x="1" y="2" width="14" height="3.6" rx="0.8" fill="#3a3a3a"/><rect x="2.5" y="3.3" width="1.3" height="1" fill="#5fd35f"/></svg>
<div class="a" style="left:61px;top:305px;width:75px;height:15px;overflow:hidden"><div class="t" style="left:0;top:1.5px;font-size:11.2px;color:#1b1b1b">New Volume (D:)</div></div>
<svg class="a" style="left:13px;top:338px" width="6" height="10" viewBox="0 0 6 10"><path d="M1.5 1.5 L4.5 5 L1.5 8.5" fill="none" stroke="#666" stroke-width="1"/></svg>
<svg class="a" style="left:33px;top:334px" width="17" height="16" viewBox="0 0 17 16"><rect x="2" y="3" width="15" height="10" rx="1" fill="#1a9ad8"/><rect x="3" y="4" width="13" height="8" fill="#38b4ec"/><rect x="8" y="13" width="3" height="1.5" fill="#6a7c88"/><rect x="6" y="14.5" width="7" height="1" fill="#6a7c88"/><circle cx="4" cy="3.5" r="3.2" fill="#5bb0e0"/><path d="M2 3.5 H6 M4 1.5 V5.5" stroke="#cde" stroke-width="0.8"/></svg>
<div class="t" style="left:53px;top:337.0px;font-size:11.8px;color:#1b1b1b">Network</div>

<!-- content -->
<div class="a" style="left:152px;top:109px;width:584px;height:267px;background:#fff"></div>
<svg class="a" style="left:183px;top:120px" width="76" height="86"><use href="#us"/></svg>
<div class="t" style="left:167.0px;top:212.8px;width:110px;text-align:center;font-size:11.4px;color:#1b1b1b">bilateral_frame_0</div>
<div class="t" style="left:167.0px;top:228.4px;width:110px;text-align:center;font-size:11.4px;color:#1b1b1b">345</div>
<svg class="a" style="left:292.5px;top:120px" width="76" height="86"><use href="#us"/></svg>
<div class="t" style="left:276.5px;top:212.8px;width:110px;text-align:center;font-size:11.4px;color:#1b1b1b">bilateral_frame_0</div>
<div class="t" style="left:276.5px;top:228.4px;width:110px;text-align:center;font-size:11.4px;color:#1b1b1b">346</div>
<svg class="a" style="left:402px;top:120px" width="76" height="86"><use href="#us"/></svg>
<div class="t" style="left:386.0px;top:212.8px;width:110px;text-align:center;font-size:11.4px;color:#1b1b1b">bilateral_frame_0</div>
<div class="t" style="left:386.0px;top:228.4px;width:110px;text-align:center;font-size:11.4px;color:#1b1b1b">347</div>
<svg class="a" style="left:511.5px;top:120px" width="76" height="86"><use href="#us"/></svg>
<div class="t" style="left:495.5px;top:212.8px;width:110px;text-align:center;font-size:11.4px;color:#1b1b1b">bilateral_frame_0</div>
<div class="t" style="left:495.5px;top:228.4px;width:110px;text-align:center;font-size:11.4px;color:#1b1b1b">348</div>
<svg class="a" style="left:621px;top:120px" width="76" height="86"><use href="#us"/></svg>
<div class="t" style="left:605.0px;top:212.8px;width:110px;text-align:center;font-size:11.4px;color:#1b1b1b">bilateral_frame_0</div>
<div class="t" style="left:605.0px;top:228.4px;width:110px;text-align:center;font-size:11.4px;color:#1b1b1b">349</div>
<svg class="a" style="left:183px;top:250.7px" width="76" height="86"><use href="#us"/></svg>
<div class="t" style="left:167.0px;top:343.9px;width:110px;text-align:center;font-size:11.4px;color:#1b1b1b">bilateral_frame_0</div>
<div class="t" style="left:167.0px;top:359.5px;width:110px;text-align:center;font-size:11.4px;color:#1b1b1b">350</div>
<svg class="a" style="left:292.5px;top:250.7px" width="76" height="86"><use href="#us"/></svg>
<div class="t" style="left:276.5px;top:343.9px;width:110px;text-align:center;font-size:11.4px;color:#1b1b1b">bilateral_frame_0</div>
<div class="t" style="left:276.5px;top:359.5px;width:110px;text-align:center;font-size:11.4px;color:#1b1b1b">351</div>
<svg class="a" style="left:402px;top:250.7px" width="76" height="86"><use href="#us"/></svg>
<div class="t" style="left:386.0px;top:343.9px;width:110px;text-align:center;font-size:11.4px;color:#1b1b1b">bilateral_frame_0</div>
<div class="t" style="left:386.0px;top:359.5px;width:110px;text-align:center;font-size:11.4px;color:#1b1b1b">352</div>
<svg class="a" style="left:511.5px;top:250.7px" width="76" height="86"><use href="#us"/></svg>
<div class="t" style="left:495.5px;top:343.9px;width:110px;text-align:center;font-size:11.4px;color:#1b1b1b">bilateral_frame_0</div>
<div class="t" style="left:495.5px;top:359.5px;width:110px;text-align:center;font-size:11.4px;color:#1b1b1b">353</div>
<svg class="a" style="left:621px;top:250.7px" width="76" height="86"><use href="#us"/></svg>
<div class="t" style="left:605.0px;top:343.9px;width:110px;text-align:center;font-size:11.4px;color:#1b1b1b">bilateral_frame_0</div>
<div class="t" style="left:605.0px;top:359.5px;width:110px;text-align:center;font-size:11.4px;color:#1b1b1b">354</div>
<svg class="a" style="left:724px;top:114px" width="8" height="7" viewBox="0 0 8 7"><path d="M0.5 6 L4 1 L7.5 6 Z" fill="#a6a6a6"/></svg>
<svg class="a" style="left:724px;top:364px" width="8" height="7" viewBox="0 0 8 7"><path d="M0.5 1 L4 6 L7.5 1 Z" fill="#a6a6a6"/></svg>
<div class="a" style="left:725px;top:280px;width:6px;height:16px;background:#8a8a8a;border-radius:3px"></div>

<!-- bottom -->
<div class="t" style="left:115px;top:394px;font-size:11.2px;color:#1b1b1b">File name:</div>
<div class="a" style="left:173px;top:388px;width:351px;height:23px;background:#fff;border:1px solid #4b9be0;box-shadow:inset 0 0 0 0.5px #7ab6ea;border-radius:2px"></div>
<div class="a" style="left:176px;top:391px;width:1px;height:16px;background:#333"></div>
<svg class="a" style="left:509px;top:396px" width="10" height="7" viewBox="0 0 10 7"><path d="M1 1.5 L5 5.5 L9 1.5" fill="none" stroke="#555" stroke-width="1"/></svg>
<div class="a" style="left:536px;top:389px;width:183px;height:21px;background:#fff;border:1px solid #dedede;border-radius:3px"></div>
<div class="t" style="left:539px;top:394px;font-size:11.2px;color:#1b1b1b">All Files</div>
<svg class="a" style="left:705px;top:396px" width="10" height="7" viewBox="0 0 10 7"><path d="M1 1.5 L5 5.5 L9 1.5" fill="none" stroke="#555" stroke-width="1"/></svg>
<div class="a" style="left:537px;top:417px;width:84px;height:25px;background:#fff;border:1px solid #5aa1dc;border-radius:3px"></div>
<div class="t" style="left:564px;top:424px;font-size:11.2px;color:#1b1b1b">Open</div>
<div class="a" style="left:635px;top:417px;width:83px;height:25px;background:#fff;border:1px solid #dcdcdc;border-radius:3px"></div>
<div class="t" style="left:659px;top:424px;font-size:11.2px;color:#1b1b1b">Cancel</div>
<svg class="a" style="left:726px;top:448px" width="8" height="8" viewBox="0 0 8 8"><g fill="#a8a8a8"><rect x="6" y="0" width="1.3" height="1.3"/><rect x="3" y="3" width="1.3" height="1.3"/><rect x="6" y="3" width="1.3" height="1.3"/><rect x="0" y="6" width="1.3" height="1.3"/><rect x="3" y="6" width="1.3" height="1.3"/><rect x="6" y="6" width="1.3" height="1.3"/></g></svg>
</div>

<svg class="a" style="left:95px;top:205px" width="13" height="20" viewBox="0 0 13 20"><path d="M1 1 V15.5 L4.6 12.2 L7 17.8 L9.2 16.8 L6.9 11.4 H11.6 Z" fill="#fff" stroke="#111" stroke-width="1" stroke-linejoin="round"/></svg>
<svg class="a" style="left:731px;top:282px" width="13" height="20" viewBox="0 0 13 20"><path d="M1 1 V15.5 L4.6 12.2 L7 17.8 L9.2 16.8 L6.9 11.4 H11.6 Z" fill="#fff" stroke="#111" stroke-width="1" stroke-linejoin="round"/></svg>
</body></html>
